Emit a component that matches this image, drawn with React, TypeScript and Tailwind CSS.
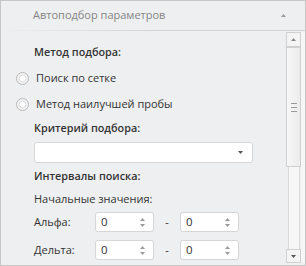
import React from "react";

const Radio = () => (
  <svg width="13" height="13" viewBox="0 0 13 13" className="shrink-0">
    <circle cx="6.5" cy="6.5" r="6" fill="#f3f3f3" stroke="#b8b8b8" strokeWidth="1" />
    <circle cx="6.5" cy="6.5" r="3.5" fill="#ffffff" stroke="#dcdcdc" strokeWidth="1" />
  </svg>
);

const TriUp = ({ color = "#8a8a8a" }: { color?: string }) => (
  <svg width="5" height="3" viewBox="0 0 5 3"><path d="M0 3 L2.5 0 L5 3 Z" fill={color} /></svg>
);
const TriDown = ({ color = "#8a8a8a" }: { color?: string }) => (
  <svg width="5" height="3" viewBox="0 0 5 3"><path d="M0 0 L5 0 L2.5 3 Z" fill={color} /></svg>
);

const Spin = () => (
  <div className="w-[59px] h-[20px] bg-white border border-[#d6d6d6] rounded-[3px] flex items-center pl-[5px] pr-[8px]">
    <span className="flex-1 text-[11.5px] text-[#333]">0</span>
    <div className="flex flex-col gap-[3px]">
      <TriUp color="#9a9a9a" />
      <TriDown color="#9a9a9a" />
    </div>
  </div>
);

export default function App() {
  return (
    <div
      className="w-[306px] h-[266px] border border-[#c6c6c6] bg-[#eeeff0] flex flex-col overflow-hidden text-[11px] text-[#333]"
      style={{ fontFamily: '"Open Sans", "Noto Sans", sans-serif' }}
    >
      <div className="h-[29px] flex items-center pl-[32px] pr-[19px] shrink-0">
        <span className="flex-1 text-[#858585] text-[11px]">Автоподбор параметров</span>
        <TriUp color="#9a9a9a" />
      </div>
      <div className="h-px bg-gradient-to-r from-[#eeeff0] via-[#d4d4d4] to-[#d4d4d4] shrink-0" />
      <div className="flex-1 flex min-h-0">
        <div className="flex-1 flex flex-col pt-[9px]">
          <div className="h-[24px] flex items-center pl-[33px] font-semibold text-[10.8px]">Метод подбора:</div>
          <div className="h-[28px] flex items-center pl-[15px] gap-[7px]">
            <Radio />
            <span>Поиск по сетке</span>
          </div>
          <div className="h-[24px] flex items-center pl-[15px] gap-[7px]">
            <Radio />
            <span>Метод наилучшей пробы</span>
          </div>
          <div className="h-[24px] flex items-center pl-[33px] font-semibold text-[10.8px]">Критерий подбора:</div>
          <div className="pl-[33px] mt-[2px]">
            <div className="w-[219px] h-[21px] bg-white border border-[#d6d6d6] rounded-[3px] flex items-center justify-end pr-[9px]">
              <TriDown color="#555" />
            </div>
          </div>
          <div className="h-[24px] mt-[1px] flex items-center pl-[33px] font-semibold text-[10.8px]">Интервалы поиска:</div>
          <div className="h-[22px] flex items-center pl-[33px]">Начальные значения:</div>
          <div className="mt-[2px] flex items-center pl-[33px]">
            <span className="w-[61px]">Альфа:</span>
            <Spin />
            <span className="w-[26px] text-center">-</span>
            <Spin />
          </div>
          <div className="mt-[8px] flex items-center pl-[33px]">
            <span className="w-[61px]">Дельта:</span>
            <Spin />
            <span className="w-[26px] text-center">-</span>
            <Spin />
          </div>
        </div>
        <div className="w-[19px] flex shrink-0 pt-[1px] pb-[2px]">
          <div className="w-[15px] flex flex-col">
            <div className="h-[15px] border border-[#d0d0d0] bg-[#f4f4f4] flex items-center justify-center">
              <TriUp color="#8a8a8a" />
            </div>
            <div className="h-[120px] border border-[#d0d0d0] bg-gradient-to-r from-[#f7f7f7] to-[#ececec] flex flex-col items-center justify-center">
              <div className="w-[6px] h-px bg-[#9a9a9a]" />
              <div className="w-[6px] h-px mt-[3px] bg-[#9a9a9a]" />
              <div className="w-[6px] h-px mt-[3px] bg-[#9a9a9a]" />
            </div>
            <div className="flex-1 flex justify-center">
              <div className="w-[12px] border-x border-[#dadada] bg-[#f6f6f6]" />
            </div>
            <div className="h-[14px] border border-[#d0d0d0] bg-[#f4f4f4] flex items-center justify-center">
              <TriDown color="#555" />
            </div>
          </div>
          <div className="flex-1 bg-[#f6f6f6]" />
        </div>
      </div>
    </div>
  );
}
